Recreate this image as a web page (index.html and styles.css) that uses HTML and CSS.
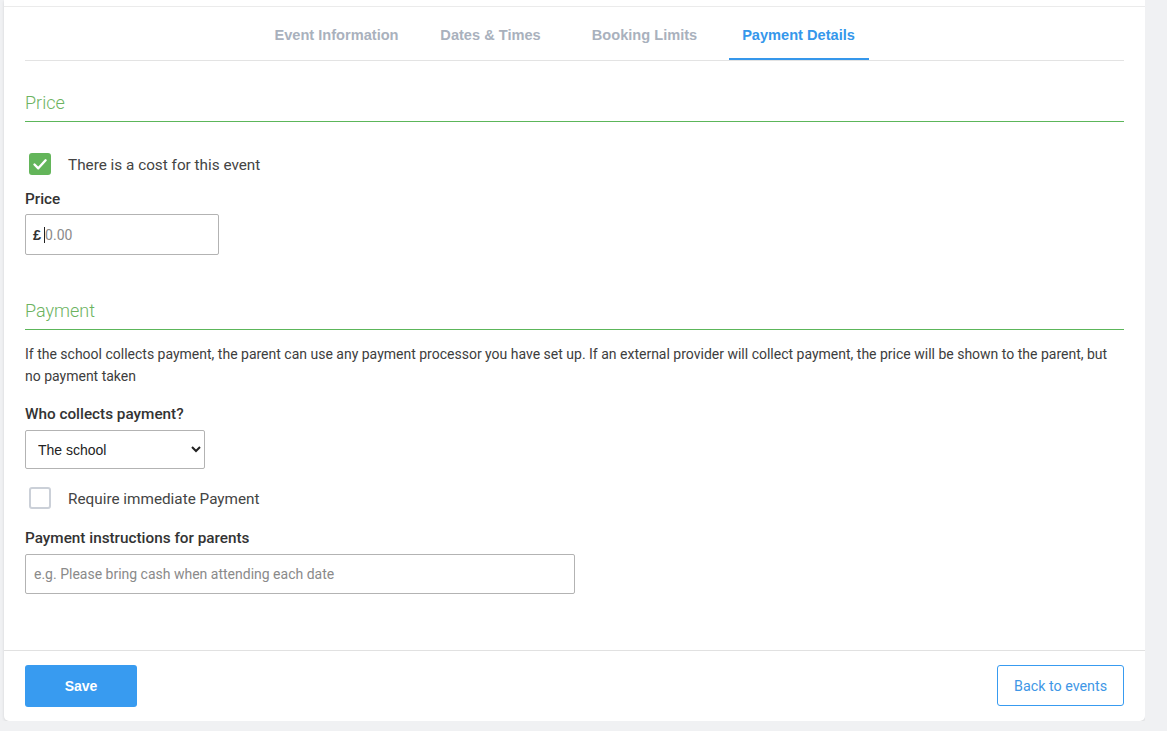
FILE: index.html
```html
<!DOCTYPE html>
<html lang="en">
<head>
  <meta charset="UTF-8" />
  <meta name="viewport" content="width=device-width, initial-scale=1.0" />
  <title>Edit Event - Payment Details</title>
  <link rel="stylesheet" href="styles.css">
</head>
<body>
  <div class="card">
    <div class="card-top"></div>

    <nav class="tabs">
      <a class="tab" href="#">Event Information</a>
      <a class="tab" href="#">Dates &amp; Times</a>
      <a class="tab" href="#">Booking Limits</a>
      <a class="tab active" href="#">Payment Details</a>
    </nav>

    <div class="card-body">
      <h2 class="section-title">Price</h2>

      <label class="check-row">
        <span class="checkbox checked">
          <svg viewBox="0 0 22 22" width="22" height="22">
            <path d="M5.5 11.5l3.8 3.8 7.3-8" fill="none" stroke="#fff" stroke-width="2.4" stroke-linecap="round" stroke-linejoin="round"/>
          </svg>
        </span>
        <span class="check-label">There is a cost for this event</span>
      </label>

      <div class="field price-field">
        <label class="field-label">Price</label>
        <div class="input-group">
          <span class="currency">£</span>
          <span class="caret"></span>
          <input class="bare-input" type="text" placeholder="0.00">
        </div>
      </div>

      <h2 class="section-title payment-title">Payment</h2>
      <p class="help-text">If the school collects payment, the parent can use any payment processor you have set up. If an external provider will collect payment, the price will be shown to the parent, but no payment taken</p>

      <div class="field">
        <label class="field-label">Who collects payment?</label>
        <select class="select">
          <option>The school</option>
          <option>An external provider</option>
        </select>
      </div>

      <label class="check-row immediate-row">
        <span class="checkbox"></span>
        <span class="check-label">Require immediate Payment</span>
      </label>

      <div class="field">
        <label class="field-label">Payment instructions for parents</label>
        <input class="text-input wide" type="text" placeholder="e.g. Please bring cash when attending each date">
      </div>
    </div>

    <div class="card-footer">
      <button class="btn btn-primary">Save</button>
      <button class="btn btn-outline">Back to events</button>
    </div>
  </div>
</body>
</html>
```

FILE: styles.css
```css
* {
  margin: 0;
  padding: 0;
  box-sizing: border-box;
}

body {
  background: #f0f1f3;
  font-family: Roboto, 'Liberation Sans', sans-serif;
  color: #3d3d3d;
  font-size: 14px;
  padding-left: 4px;
  width: 1145px;
}

.card {
  background: #fff;
  border-radius: 0 0 5px 5px;
  box-shadow: 0 1px 3px rgba(0, 0, 0, 0.12);
}

.card-top {
  height: 7px;
  border-bottom: 1px solid #ebebeb;
}

.tabs {
  margin: 0 21px;
  display: flex;
  justify-content: center;
  border-bottom: 1px solid #e3e3e3;
}

.tab {
  width: 140px;
  margin-right: 14px;
  padding: 18px 0 13px;
  line-height: 20px;
  text-align: center;
  font-family: 'Liberation Sans', Arial, sans-serif;
  font-weight: bold;
  font-size: 14.6px;
  color: #a9b1bd;
  text-decoration: none;
  border-bottom: 2px solid transparent;
}

.tab.active {
  color: #3597eb;
  border-bottom-color: #3597eb;
}

.card-body {
  padding: 0 21px 56px;
}

.section-title {
  margin-top: 30px;
  padding-bottom: 6px;
  font-size: 18px;
  line-height: 24px;
  font-weight: 300;
  color: #6cb35f;
  border-bottom: 1px solid #5cb65a;
}

.payment-title {
  margin-top: 44px;
}

.check-row {
  display: flex;
  align-items: center;
  margin-top: 31px;
  padding-left: 4px;
  height: 22px;
}

.checkbox {
  width: 22px;
  height: 22px;
  border-radius: 3px;
  border: 2px solid #cbd0d8;
  display: flex;
  align-items: center;
  justify-content: center;
}

.checkbox.checked {
  background: #63b55a;
  border-color: #63b55a;
}

.checkbox.checked svg {
  flex: none;
}

.check-label {
  margin-left: 17px;
  padding-top: 2px;
  color: #444;
  font-size: 15.3px;
  line-height: 20px;
}

.field {
  margin-top: 16px;
}

.price-field {
  margin-top: 13px;
}

.field-label {
  display: block;
  padding-top: 1px;
  font-weight: 500;
  font-size: 15.3px;
  line-height: 20px;
  color: #333;
  margin-bottom: 6px;
}

.price-field .field-label {
  margin-bottom: 5px;
}

.input-group {
  width: 194px;
  height: 41px;
  border: 1px solid #b3b3b3;
  border-radius: 2px;
  display: flex;
  align-items: center;
  padding-left: 7px;
}

.currency {
  font-family: 'Liberation Sans', Arial, sans-serif;
  font-weight: bold;
  font-size: 14.5px;
  color: #333;
}

.caret {
  width: 1px;
  height: 16px;
  background: #222;
  margin-left: 3px;
}

.bare-input {
  border: none;
  outline: none;
  font-family: Roboto, sans-serif;
  font-size: 14px;
  width: 140px;
  color: #333;
}

.bare-input::placeholder,
.text-input::placeholder {
  color: #8a8a8a;
}

.help-text {
  margin-top: 13px;
  font-size: 14px;
  line-height: 22px;
  color: #3d3d3d;
}

.select {
  width: 180px;
  height: 39px;
  border: 1px solid #b3b3b3;
  border-radius: 2px;
  background: #fff;
  padding-left: 8px;
  font-family: 'Liberation Sans', Arial, sans-serif;
  font-size: 14px;
  color: #222;
}

.immediate-row {
  margin-top: 18px;
}

.immediate-row + .field {
  margin-top: 18px;
}

.text-input {
  height: 40px;
  border: 1px solid #b3b3b3;
  border-radius: 2px;
  padding: 0 8px;
  font-family: Roboto, sans-serif;
  font-size: 14px;
  color: #333;
}

.text-input.wide {
  width: 550px;
}

.card-footer {
  border-top: 1px solid #e1e1e1;
  padding: 14px 21px;
  display: flex;
  justify-content: space-between;
}

.btn {
  height: 42px;
  border-radius: 3px;
  font-size: 14px;
  cursor: pointer;
}

.btn-primary {
  width: 112px;
  background: #389bf0;
  border: none;
  color: #fff;
  font-family: 'Liberation Sans', Arial, sans-serif;
  font-weight: bold;
}

.btn-outline {
  width: 127px;
  height: 41px;
  background: #fff;
  border: 1px solid #389bf0;
  color: #3f97e6;
  font-family: Roboto, sans-serif;
  font-size: 14.3px;
}
```
